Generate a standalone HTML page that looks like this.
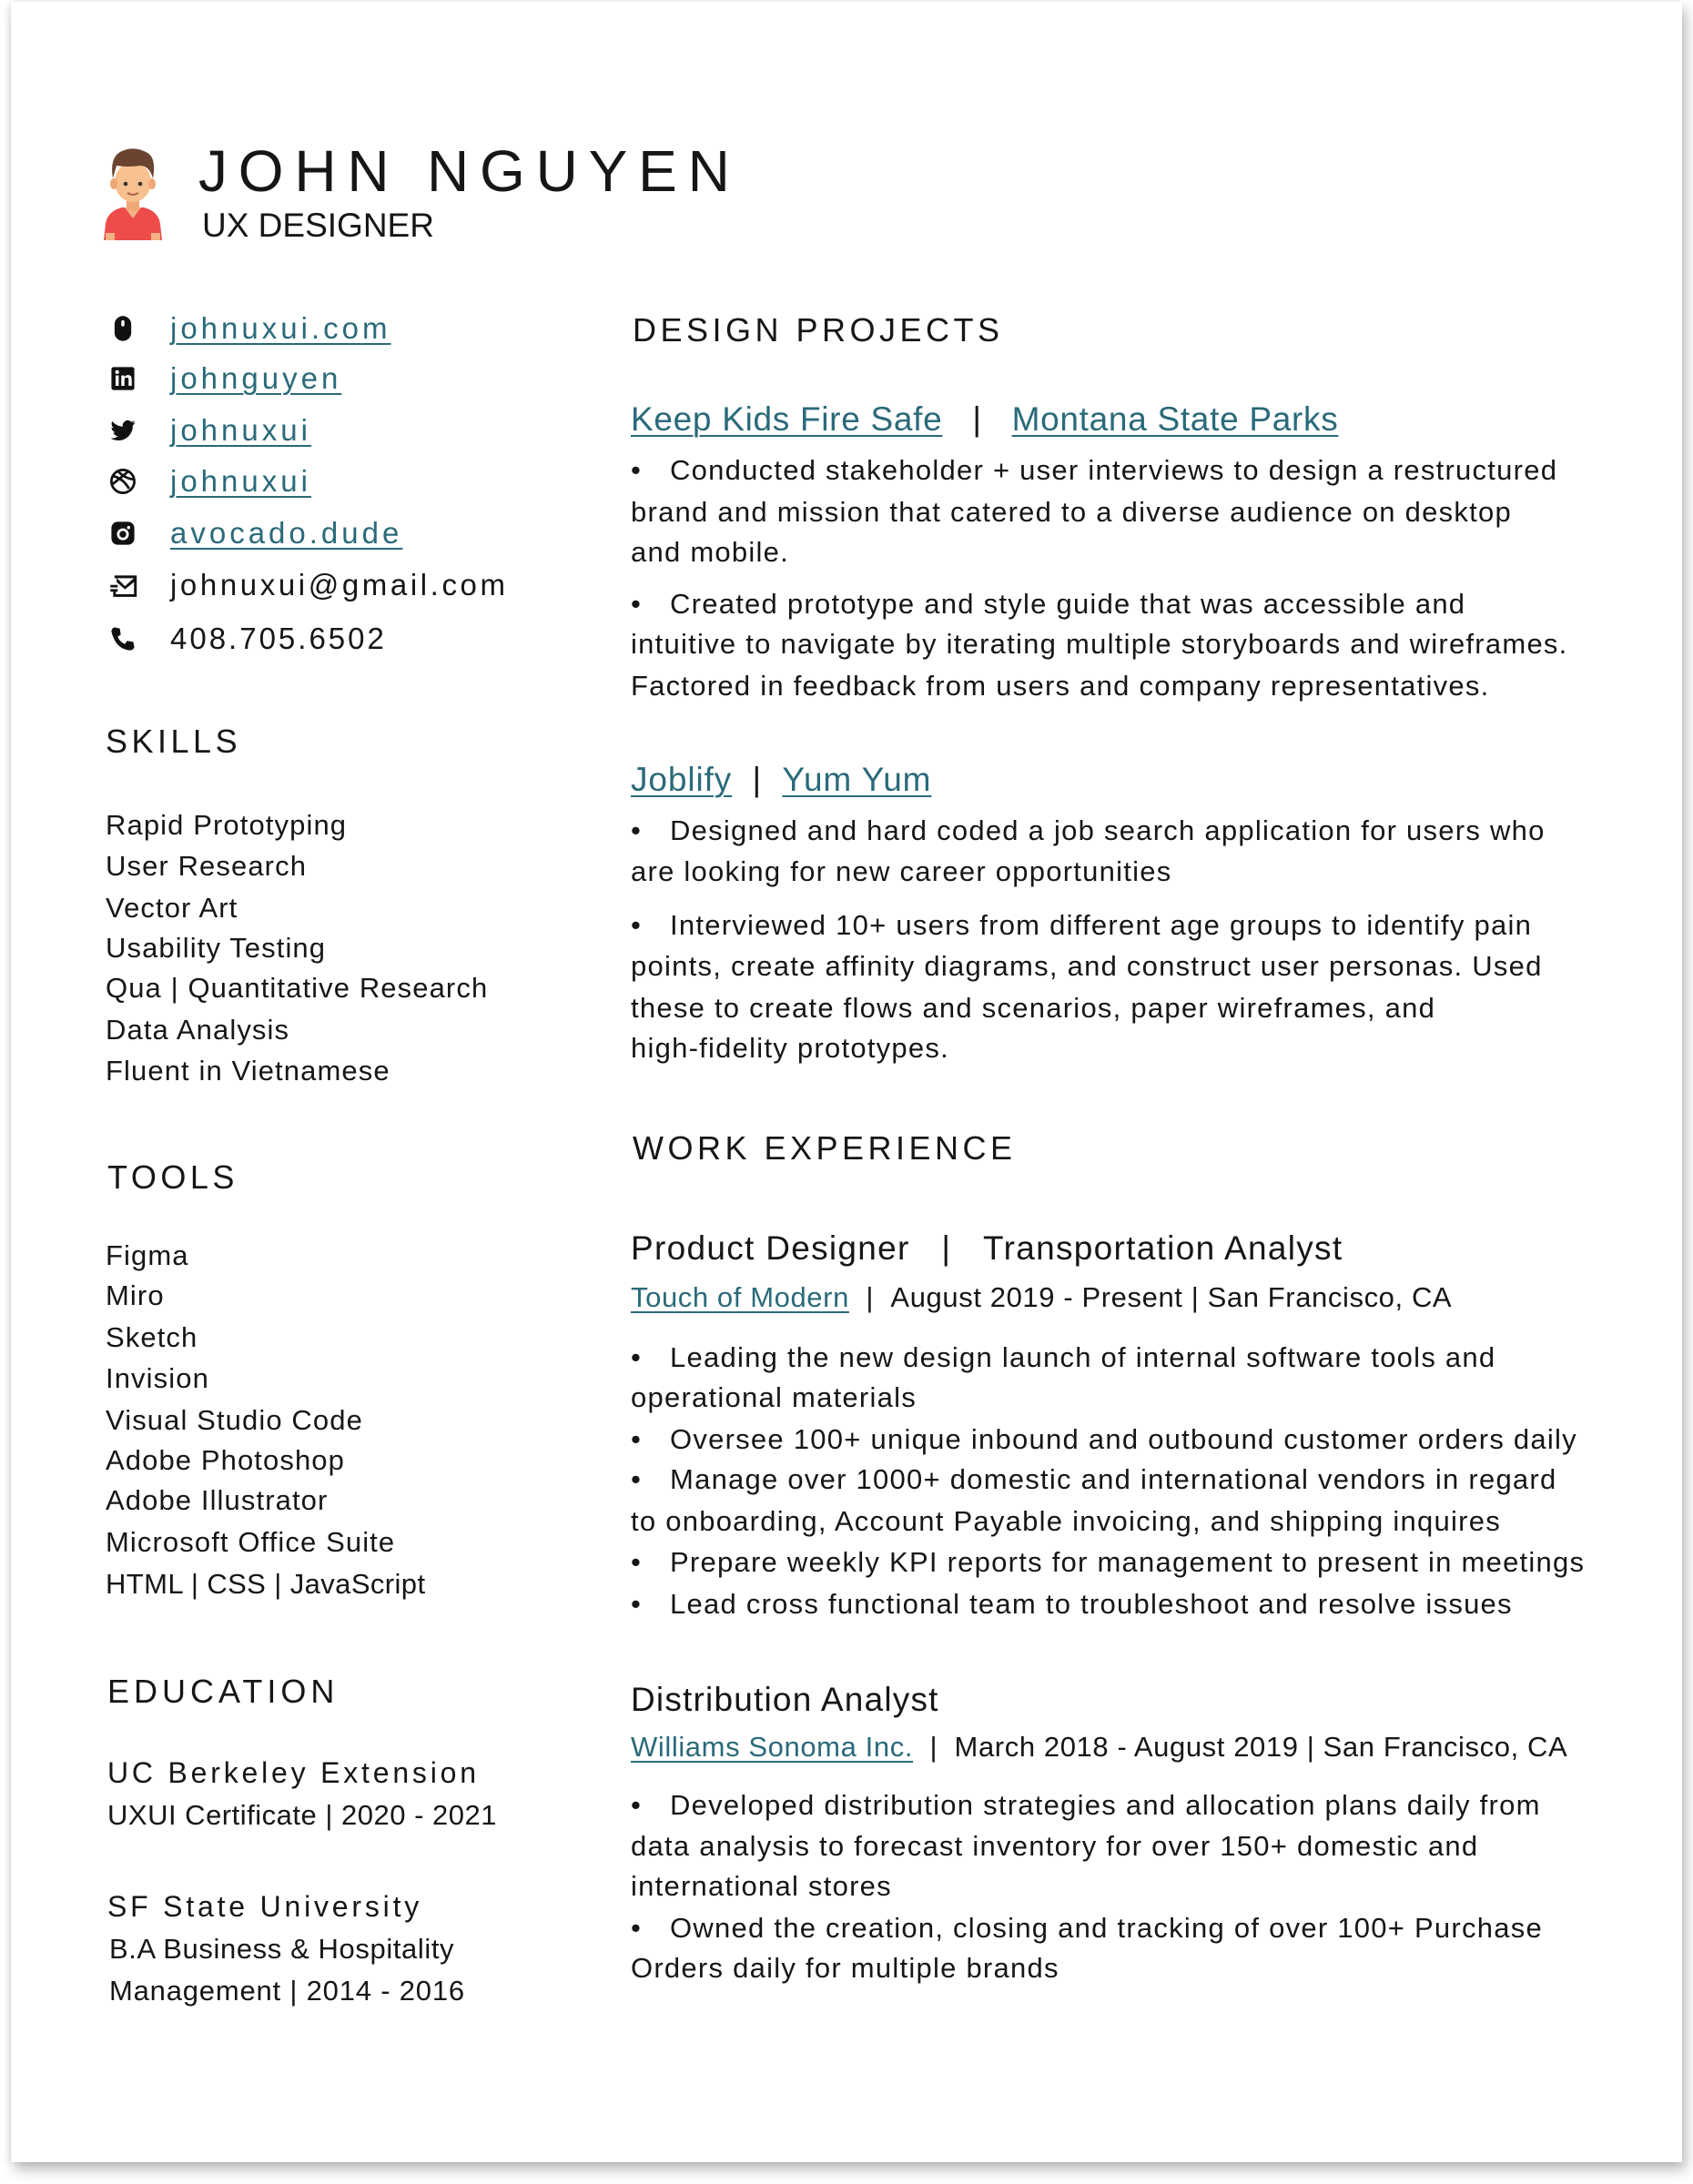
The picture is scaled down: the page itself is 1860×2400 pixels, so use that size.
<!DOCTYPE html>
<html><head><meta charset="utf-8">
<style>
*{margin:0;padding:0;box-sizing:border-box}
html,body{width:1860px;height:2400px;background:#fff;overflow:hidden}
body{font-family:"Liberation Sans",sans-serif;color:#161616;position:relative}
.card{position:absolute;left:12px;top:2px;width:1836px;height:2374px;background:#fff;box-shadow:4px 8px 14px rgba(0,0,0,.28),-2px 0 6px rgba(0,0,0,.08)}
.l{position:absolute;height:46px;line-height:46px;white-space:nowrap}
.a{color:#2a6a7a;text-decoration:underline;text-decoration-thickness:2px;text-underline-offset:5px}
.ct{left:187px;font-size:33px;letter-spacing:4px}
.h{font-size:36px;letter-spacing:4.5px;font-weight:500}
.lt{left:116px;font-size:31px;letter-spacing:1.1px}
.r{left:693px;font-size:31px;letter-spacing:1.25px}
.b{display:inline-block;width:43px}
.ic{position:absolute;left:119px;width:32px;height:32px}
</style></head><body>
<div class="card"></div>

<svg style="position:absolute;left:110px;top:160px" width="72" height="104" viewBox="0 0 72 104">
<path d="M6 86 Q8 72 24 68 L48 68 Q64 72 66 86 L68 104 L4 104 Z" fill="#ee4b4b"/>
<path d="M27 68 L36 80 L45 68 Z" fill="#f4b183"/>
<rect x="29" y="55" width="14" height="16" fill="#f0a877"/>
<ellipse cx="36" cy="40" rx="20" ry="22" fill="#f7c08f"/>
<ellipse cx="15" cy="42" rx="4" ry="6" fill="#f0a877"/><ellipse cx="57" cy="42" rx="4" ry="6" fill="#f0a877"/>
<path d="M14 36 Q10 12 24 6 Q38 0 52 8 Q62 14 58 36 Q54 22 44 22 Q30 24 18 22 Z" fill="#6b4330"/>
<circle cx="28" cy="42" r="2.3" fill="#333"/><circle cx="44" cy="42" r="2.3" fill="#333"/>
<path d="M30 52 Q36 56 42 52" stroke="#b5634a" stroke-width="2" fill="none"/>
<rect x="6" y="96" width="10" height="8" fill="#f4b183"/><rect x="56" y="96" width="10" height="8" fill="#f4b183"/>
</svg>
<div class="l" style="left:218px;top:150px;height:76px;line-height:76px;font-size:64px;letter-spacing:11.8px;font-weight:500">JOHN NGUYEN</div>
<div class="l" style="left:222px;top:225px;font-size:37px;letter-spacing:0px">UX DESIGNER</div>

<svg class="ic" style="top:345px" viewBox="0 0 28 28"><rect x="6" y="2" width="16" height="24" rx="8" fill="#111"/><rect x="12.5" y="6" width="3" height="6" rx="1.5" fill="#fff"/></svg>
<svg class="ic" style="top:400px" viewBox="0 0 28 28"><rect x="3" y="3" width="22" height="22" rx="2" fill="#111"/><rect x="7" y="11" width="3" height="10" fill="#fff"/><circle cx="8.5" cy="7.8" r="1.8" fill="#fff"/><path d="M12.5 11h3v1.6q1.2-2 3.5-2q3.5 0 3.5 4V21h-3v-6q0-2-1.8-2q-2.2 0-2.2 2.3V21h-3Z" fill="#fff"/></svg>
<svg class="ic" style="top:457px" viewBox="0 0 28 28"><path d="M26 6.5c-.9.4-1.8.6-2.8.8 1-.6 1.8-1.6 2.1-2.7-1 .6-2 1-3.1 1.2A4.9 4.9 0 0 0 13.9 10.3 13.9 13.9 0 0 1 3.8 5.2a4.9 4.9 0 0 0 1.5 6.5c-.8 0-1.6-.2-2.2-.6 0 2.4 1.7 4.4 3.9 4.8-.7.2-1.5.2-2.2.1.6 2 2.4 3.4 4.6 3.4A9.8 9.8 0 0 1 2 21.4 13.9 13.9 0 0 0 23.5 9.7v-.6c1-.7 1.8-1.6 2.5-2.6Z" fill="#111"/></svg>
<svg class="ic" style="top:513px" viewBox="0 0 28 28" fill="none" stroke="#111" stroke-width="2.4"><circle cx="14" cy="14" r="11"/><path d="M5 9q9 2 15 12M9 4q8 8 16 8M3.5 17q8-6 15-12"/></svg>
<svg class="ic" style="top:570px" viewBox="0 0 28 28"><rect x="3" y="3" width="22" height="22" rx="6" fill="#111"/><circle cx="14" cy="15" r="4.5" fill="none" stroke="#fff" stroke-width="2.4"/><circle cx="19.5" cy="8.5" r="1.5" fill="#fff"/></svg>
<svg class="ic" style="top:627px" viewBox="0 0 28 28"><path d="M6 6h20v18H6v-4" fill="none" stroke="#111" stroke-width="2.6"/><path d="M8 7l8 8 10-9v4l-10 8-8-7Z" fill="#111"/><path d="M2 15h7M2 19h7" stroke="#111" stroke-width="2.4"/></svg>
<svg class="ic" style="top:686px" viewBox="0 0 28 28"><path d="M6 3l5 1 1 6-3 2q2 5 7 7l2-3 6 1 1 5q-1 3-4 3Q7 24 3 7q0-3 3-4Z" fill="#111"/></svg>

<div class="l ct a" style="top:338px">johnuxui.com</div>
<div class="l ct a" style="top:393px">johnguyen</div>
<div class="l ct a" style="top:450px">johnuxui</div>
<div class="l ct a" style="top:506px">johnuxui</div>
<div class="l ct a" style="top:563px">avocado.dude</div>
<div class="l ct" style="top:620px;letter-spacing:3.6px">johnuxui@gmail.com</div>
<div class="l ct" style="top:679px;letter-spacing:3px">408.705.6502</div>

<div class="l h" style="left:116px;top:792px">SKILLS</div>
<div class="l lt" style="top:884px">Rapid Prototyping</div>
<div class="l lt" style="top:929px">User Research</div>
<div class="l lt" style="top:975px">Vector Art</div>
<div class="l lt" style="top:1019px">Usability Testing</div>
<div class="l lt" style="top:1063px">Qua | Quantitative Research</div>
<div class="l lt" style="top:1109px">Data Analysis</div>
<div class="l lt" style="top:1154px">Fluent in Vietnamese</div>

<div class="l h" style="left:118px;top:1271px">TOOLS</div>
<div class="l lt" style="top:1357px">Figma</div>
<div class="l lt" style="top:1401px">Miro</div>
<div class="l lt" style="top:1447px">Sketch</div>
<div class="l lt" style="top:1492px">Invision</div>
<div class="l lt" style="top:1538px">Visual Studio Code</div>
<div class="l lt" style="top:1582px">Adobe Photoshop</div>
<div class="l lt" style="top:1626px">Adobe Illustrator</div>
<div class="l lt" style="top:1672px">Microsoft Office Suite</div>
<div class="l lt" style="top:1718px;letter-spacing:.4px">HTML | CSS | JavaScript</div>

<div class="l h" style="left:118px;top:1836px;letter-spacing:5px">EDUCATION</div>
<div class="l lt" style="top:1925px;left:118px;font-size:32px;letter-spacing:3.8px">UC Berkeley Extension</div>
<div class="l lt" style="top:1972px;left:118px;letter-spacing:.5px">UXUI Certificate | 2020 - 2021</div>
<div class="l lt" style="top:2072px;left:118px;font-size:32px;letter-spacing:3.8px">SF State University</div>
<div class="l lt" style="top:2119px;left:120px;letter-spacing:.6px">B.A Business &amp; Hospitality</div>
<div class="l lt" style="top:2165px;left:120px;letter-spacing:.8px">Management | 2014 - 2016</div>

<div class="l h" style="left:695px;top:340px">DESIGN PROJECTS</div>
<div class="l r" style="top:438px;font-size:37px;letter-spacing:.7px"><span class="a">Keep Kids Fire Safe</span>&nbsp;&nbsp;&nbsp;|&nbsp;&nbsp;&nbsp;<span class="a">Montana State Parks</span></div>
<div class="l r" style="top:494px"><span class="b">•</span>Conducted stakeholder + user interviews to design a restructured</div>
<div class="l r" style="top:540px">brand and mission that catered to a diverse audience on desktop</div>
<div class="l r" style="top:584px">and mobile.</div>
<div class="l r" style="top:641px"><span class="b">•</span>Created prototype and style guide that was accessible and</div>
<div class="l r" style="top:685px">intuitive to navigate by iterating multiple storyboards and wireframes.</div>
<div class="l r" style="top:731px">Factored in feedback from users and company representatives.</div>

<div class="l r" style="top:834px;font-size:37px;letter-spacing:.9px"><span class="a">Joblify</span>&nbsp;&nbsp;|&nbsp;&nbsp;<span class="a">Yum Yum</span></div>
<div class="l r" style="top:890px"><span class="b">•</span>Designed and hard coded a job search application for users who</div>
<div class="l r" style="top:935px">are looking for new career opportunities</div>
<div class="l r" style="top:994px"><span class="b">•</span>Interviewed 10+ users from different age groups to identify pain</div>
<div class="l r" style="top:1039px">points, create affinity diagrams, and construct user personas. Used</div>
<div class="l r" style="top:1085px">these to create flows and scenarios, paper wireframes, and</div>
<div class="l r" style="top:1129px">high-fidelity prototypes.</div>

<div class="l h" style="left:695px;top:1239px">WORK EXPERIENCE</div>
<div class="l r" style="top:1349px;font-size:37px;letter-spacing:1.3px">Product Designer&nbsp;&nbsp;&nbsp;|&nbsp;&nbsp;&nbsp;Transportation Analyst</div>
<div class="l r" style="top:1403px;letter-spacing:.6px"><span class="a">Touch of Modern</span>&nbsp;&nbsp;|&nbsp;&nbsp;August 2019 - Present | San Francisco, CA</div>
<div class="l r" style="top:1469px"><span class="b">•</span>Leading the new design launch of internal software tools and</div>
<div class="l r" style="top:1513px">operational materials</div>
<div class="l r" style="top:1559px"><span class="b">•</span>Oversee 100+ unique inbound and outbound customer orders daily</div>
<div class="l r" style="top:1603px"><span class="b">•</span>Manage over 1000+ domestic and international vendors in regard</div>
<div class="l r" style="top:1649px">to onboarding, Account Payable invoicing, and shipping inquires</div>
<div class="l r" style="top:1694px"><span class="b">•</span>Prepare weekly KPI reports for management to present in meetings</div>
<div class="l r" style="top:1740px"><span class="b">•</span>Lead cross functional team to troubleshoot and resolve issues</div>

<div class="l r" style="top:1845px;font-size:37px;letter-spacing:1.2px">Distribution Analyst</div>
<div class="l r" style="top:1897px;letter-spacing:.6px"><span class="a">Williams Sonoma Inc.</span>&nbsp;&nbsp;|&nbsp;&nbsp;March 2018 - August 2019 | San Francisco, CA</div>
<div class="l r" style="top:1961px"><span class="b">•</span>Developed distribution strategies and allocation plans daily from</div>
<div class="l r" style="top:2006px">data analysis to forecast inventory for over 150+ domestic and</div>
<div class="l r" style="top:2050px">international stores</div>
<div class="l r" style="top:2096px"><span class="b">•</span>Owned the creation, closing and tracking of over 100+ Purchase</div>
<div class="l r" style="top:2140px">Orders daily for multiple brands</div>
</body></html>
